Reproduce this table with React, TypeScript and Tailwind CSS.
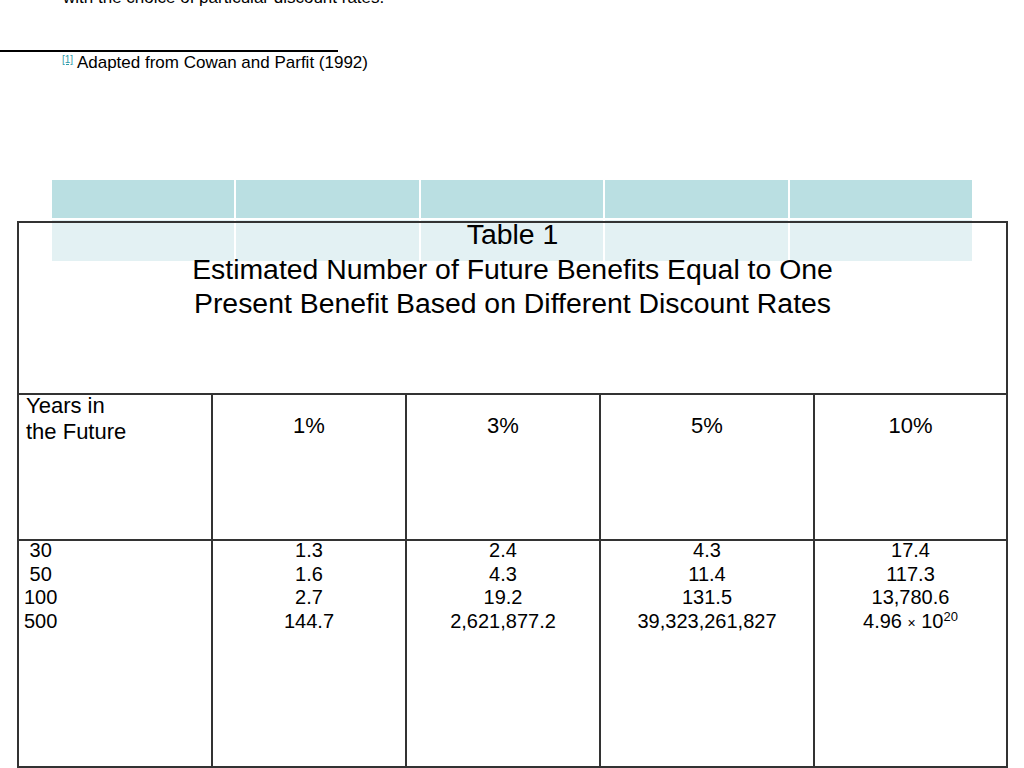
import React from 'react';

const font = { fontFamily: '"Liberation Sans", Arial, sans-serif' };

const years = [' 30', ' 50', '100', '500'];

const rates = [
  { label: '1%', values: ['1.3', '1.6', '2.7', '144.7'] },
  { label: '3%', values: ['2.4', '4.3', '19.2', '2,621,877.2'] },
  { label: '5%', values: ['4.3', '11.4', '131.5', '39,323,261,827'] },
  { label: '10%', values: ['17.4', '117.3', '13,780.6', 'sci'] },
];

// widths include the 2px right rule of each column
const colW = ['w-[194px]', 'w-[194px]', 'w-[194px]', 'w-[214px]', 'w-[191px]'];

const Sci = () => (
  <span>
    4.96 <span className="text-[14px]">×</span> 10<sup className="text-[13px] -top-[7px]">20</sup>
  </span>
);

export default function App() {
  return (
    <div className="w-[1024px] h-[768px] overflow-hidden bg-white text-black" style={font}>
      {/* tail of the previous paragraph, cut by the top edge */}
      <div className="-mt-[12px] h-[20px] pl-[63px] text-[17px] leading-[20px] whitespace-nowrap">
        with the choice of particular discount rates.
      </div>

      <div className="mt-[42px] h-[2px] w-[338px] bg-black" />

      <div className="mt-[1px] h-[20px] pl-[62px] text-[17px] leading-[20px] whitespace-nowrap">
        <span className="text-[10px] text-[#2f9aa8] underline relative -top-[5px]">[1]</span>{' '}
        Adapted from Cowan and Parfit (1992)
      </div>

      <div className="relative ml-[17px] mt-[148px] w-[991px]">
        {/* faint table left behind the real one */}
        <div className="absolute left-[35px] top-[-41px] w-[920px] grid grid-cols-5 gap-[2px] bg-white">
          {[0, 1, 2, 3, 4].map((i) => (
            <div key={'a' + i} className="h-[38px] bg-[#badfe2]" />
          ))}
          {[0, 1, 2, 3, 4].map((i) => (
            <div key={'b' + i} className="h-[41px] bg-[#e3f1f3]" />
          ))}
        </div>

        <div className="relative border-2 border-[#333]">
          <div className="h-[172px] border-b-2 border-[#333] text-center text-[28.4px] leading-[34.5px]">
            <div className="relative -top-[6px]">
              <div>Table 1</div>
              <div>Estimated Number of Future Benefits Equal to One</div>
              <div>Present Benefit Based on Different Discount Rates</div>
            </div>
          </div>

          <div className="flex h-[146px] border-b-2 border-[#333] text-[22px] leading-[26px]">
            <div className={`${colW[0]} border-r-2 border-[#333] pl-[7px]`}>
              <div className="relative -top-[2px]">
                Years in
                <br />
                the Future
              </div>
            </div>
            {rates.map((r, i) => (
              <div
                key={r.label}
                className={`${colW[i + 1]} ${i < 3 ? 'border-r-2 border-[#333]' : ''} pt-[18px] text-center`}
              >
                {r.label}
              </div>
            ))}
          </div>

          <div className="flex h-[225px] text-[20px] leading-[23.7px]">
            <div className={`${colW[0]} border-r-2 border-[#333] pl-[5px]`}>
              <div className="relative -top-[2px]">
                {years.map((y) => (
                  <div key={y} className="whitespace-pre">
                    {y}
                  </div>
                ))}
              </div>
            </div>
            {rates.map((r, i) => (
              <div
                key={r.label}
                className={`${colW[i + 1]} ${i < 3 ? 'border-r-2 border-[#333]' : ''} text-center`}
              >
                <div className="relative -top-[2px]">
                  {r.values.map((v) => (
                    <div key={v}>{v === 'sci' ? <Sci /> : v}</div>
                  ))}
                </div>
              </div>
            ))}
          </div>
        </div>
      </div>
    </div>
  );
}
